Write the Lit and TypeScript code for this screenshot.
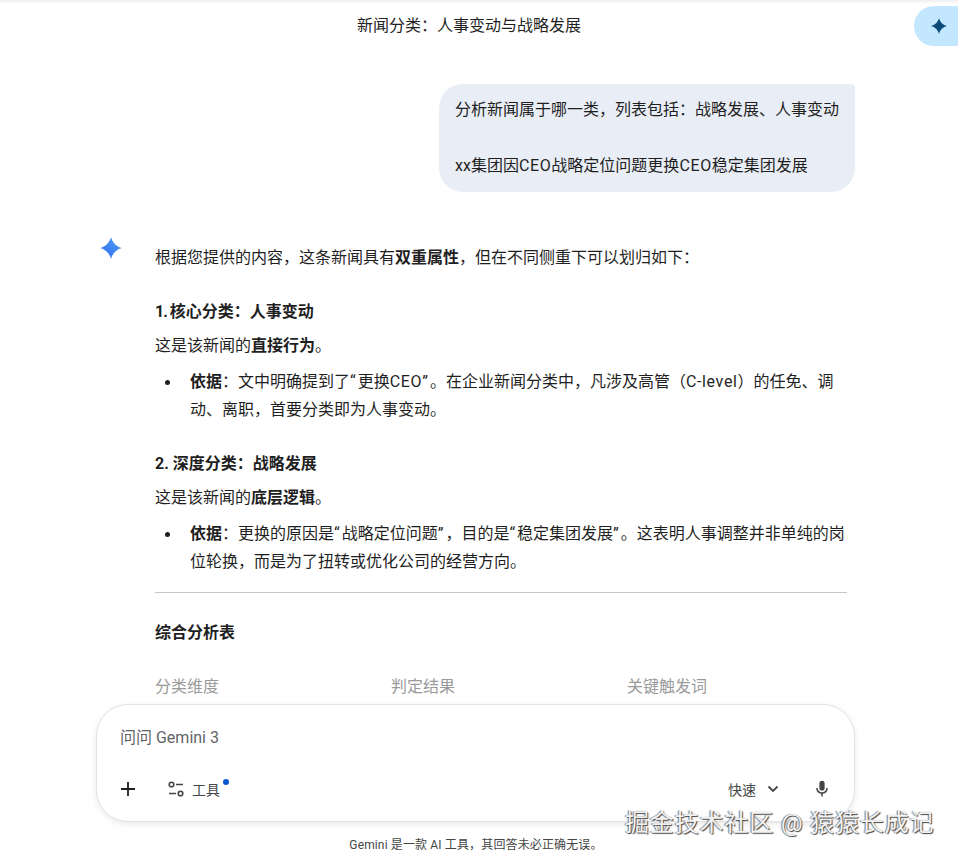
import { LitElement, html, css } from "lit";
import { customElement } from "lit/decorators.js";

const fat = "M12 0C13.4 6 18 10.6 24 12C18 13.4 13.4 18 12 24C10.6 18 6 13.4 0 12C6 10.6 10.6 6 12 0Z";

@customElement("app-root")
export class AppRoot extends LitElement {
  static styles = css`
    :host { display: block; width: 958px; height: 861px; overflow: hidden; position: relative; background: #fff;
      font-family: Roboto, "Noto Sans CJK SC", sans-serif; color: #1f1f1f; font-size: 16px; }
    * { box-sizing: border-box; }
    .page { height: 861px; display: flex; flex-direction: column; }
    .topbar { height: 50px; flex: none; display: flex; justify-content: center; padding: 12px 20px 0 0; font-size: 16px; line-height: 28px;
      background: linear-gradient(#efefef 0, #fff 4px); }
    .pill { position: absolute; left: 914px; top: 6px; width: 70px; height: 40px; border-radius: 20px; background: #c2e7ff;
      display: flex; align-items: center; padding-left: 17px; }
    .main { flex: 1; min-height: 0; overflow: hidden; padding-top: 34px; }
    .user { margin-left: 439px; width: 416px; height: 108px; padding: 12px 16px; background: #e9eef6;
      border-radius: 24px 4px 24px 24px; line-height: 28px; font-size: 16px; }
    .user p { margin: 0; white-space: nowrap; }
    .user p + p { margin-top: 28px; }
    .answer { display: flex; margin-top: 43px; padding-left: 100px; }
    .logo { width: 22px; height: 22px; flex: none; margin: 2px 33px 0 0; }
    .body { width: 692px; line-height: 28px; padding-top: 9px; font-size: 16px; }
    .body p { margin: 0; white-space: nowrap; }
    .body b { font-weight: 700; }
    .h { margin-top: 26px !important; font-weight: 700; }
    .sub { margin-top: 6px !important; }
    ul { margin: 8px 0 0; padding: 0 0 0 35px; list-style: none; position: relative; }
    li { position: relative; }
    li::before { content: ""; position: absolute; left: -25px; top: 12px; width: 5px; height: 5px; border-radius: 50%; background: #1f1f1f; }
    hr { border: 0; border-top: 1px solid #c7c7c7; margin: 16px 0 26px; }
    .tbl { display: grid; grid-template-columns: 236px 236px 220px; margin-top: 26px; color: #9a9a9a; }
    .q { letter-spacing: 2px; }
    .la { letter-spacing: .65px; }
    .one { letter-spacing: -1px; }
    .composer { flex: none; margin-left: 96px; width: 759px; height: 118px; border: 1px solid #e3e3e3; border-radius: 32px;
      background: #fff; box-shadow: 0 2px 8px -2px rgba(0,0,0,.14); padding: 19px 23px 0 23px; position: relative; z-index: 1; }
    .ph { color: #5f6368; font-size: 16px; line-height: 28px; height: 28px; }
    .tools { display: flex; align-items: center; margin-top: 23px; height: 28px; }
    .plus { width: 18px; height: 18px; display: block; margin-left: -1px; }
    .tool { display: flex; align-items: center; margin-left: 30px; font-size: 14px; color: #444746; position: relative; }
    .tool svg { margin-right: 7px; }
    .dot { position: absolute; right: -9px; top: 0; width: 6px; height: 6px; border-radius: 50%; background: #0b57d0; }
    .grow { flex: 1; }
    .fast { font-size: 14px; color: #444746; }
    .chev { margin-left: 10px; }
    .mic { margin-left: 33px; }
    .foot { flex: none; height: 39px; text-align: center; font-size: 12px; line-height: 16px; padding: 15px 6px 0 0; color: #444746; letter-spacing: .14px; }
    .mark { position: absolute; left: 625px; top: 807px; font-size: 24px; line-height: 32px; color: #f2f2f2; white-space: nowrap;
      text-shadow: 1px 1px 1px #444, -1px 0 1px #777; z-index: 2; letter-spacing: .85px; }
  `;

  render() {
    return html`
      <div class="page">
        <div class="topbar">新闻分类：人事变动与战略发展</div>
        <div class="main">
          <div class="user">
            <p>分析新闻属于哪一类，列表包括：战略发展、人事变动</p>
            <p>xx集团因<span class="la">CEO</span>战略定位问题更换<span class="la">CEO</span>稳定集团发展</p>
          </div>
          <div class="answer">
            <svg class="logo" viewBox="0 0 24 24">
              <defs><linearGradient id="g" x1="0" y1="1" x2="1" y2="0">
                <stop offset="0" stop-color="#346bf1"/><stop offset="1" stop-color="#4fa0f7"/>
              </linearGradient></defs>
              <path d="${fat}" fill="url(#g)"/>
            </svg>
            <div class="body">
              <p>根据您提供的内容，这条新闻具有<b>双重属性</b>，但在不同侧重下可以划归如下：</p>
              <p class="h"><span class="one">1. </span>核心分类：人事变动</p>
              <p class="sub">这是该新闻的<b>直接行为</b>。</p>
              <ul>
                <li><p><b>依据</b>：文中明确提到了<span class="q">“</span>更换<span class="la">CEO</span><span class="q">”</span>。在企业新闻分类中，凡涉及高管（<span class="la">C-level</span>）的任免、调</p>
                <p>动、离职，首要分类即为人事变动。</p></li>
              </ul>
              <p class="h">2. 深度分类：战略发展</p>
              <p class="sub">这是该新闻的<b>底层逻辑</b>。</p>
              <ul>
                <li><p><b>依据</b>：更换的原因是<span class="q">“</span>战略定位问题<span class="q">”</span>，目的是<span class="q">“</span>稳定集团发展<span class="q">”</span>。这表明人事调整并非单纯的岗</p>
                <p>位轮换，而是为了扭转或优化公司的经营方向。</p></li>
              </ul>
              <hr />
              <p><b>综合分析表</b></p>
              <div class="tbl"><span>分类维度</span><span>判定结果</span><span>关键触发词</span></div>
            </div>
          </div>
        </div>
        <div class="composer">
          <div class="ph">问问 Gemini 3</div>
          <div class="tools">
            <svg class="plus" viewBox="0 0 18 18"><path d="M9 2v14M2 9h14" stroke="#1f1f1f" stroke-width="1.8" fill="none"/></svg>
            <div class="tool">
              <svg width="18" height="18" viewBox="0 0 18 18" fill="none" stroke="#444746" stroke-width="1.6">
                <circle cx="4.5" cy="4.5" r="2.3"/><path d="M9 4.5h7M2 13.5h7"/><circle cx="13.5" cy="13.5" r="2.3"/>
              </svg>
              <span>工具</span><i class="dot"></i>
            </div>
            <div class="grow"></div>
            <span class="fast">快速</span>
            <svg class="chev" width="14" height="14" viewBox="0 0 14 14"><path d="M2.5 4.5L7 9l4.5-4.5" fill="none" stroke="#444746" stroke-width="1.8"/></svg>
            <svg class="mic" width="18" height="18" viewBox="0 0 24 24" fill="#444746">
              <path d="M12 14a3.5 3.5 0 0 0 3.5-3.5v-6a3.5 3.5 0 0 0-7 0v6A3.5 3.5 0 0 0 12 14z"/>
              <path d="M17.8 10.5a5.8 5.8 0 0 1-11.6 0H4.2a7.8 7.8 0 0 0 6.8 7.7V22h2v-3.8a7.8 7.8 0 0 0 6.8-7.7z"/>
            </svg>
          </div>
        </div>
        <div class="foot">Gemini 是一款 AI 工具，其回答未必正确无误。</div>
      </div>
      <div class="pill"><svg width="16" height="16" viewBox="0 0 24 24"><path d="${fat}" fill="#0b4a78"/></svg></div>
      <div class="mark">掘金技术社区 @ 猿猿长成记</div>
    `;
  }
}
